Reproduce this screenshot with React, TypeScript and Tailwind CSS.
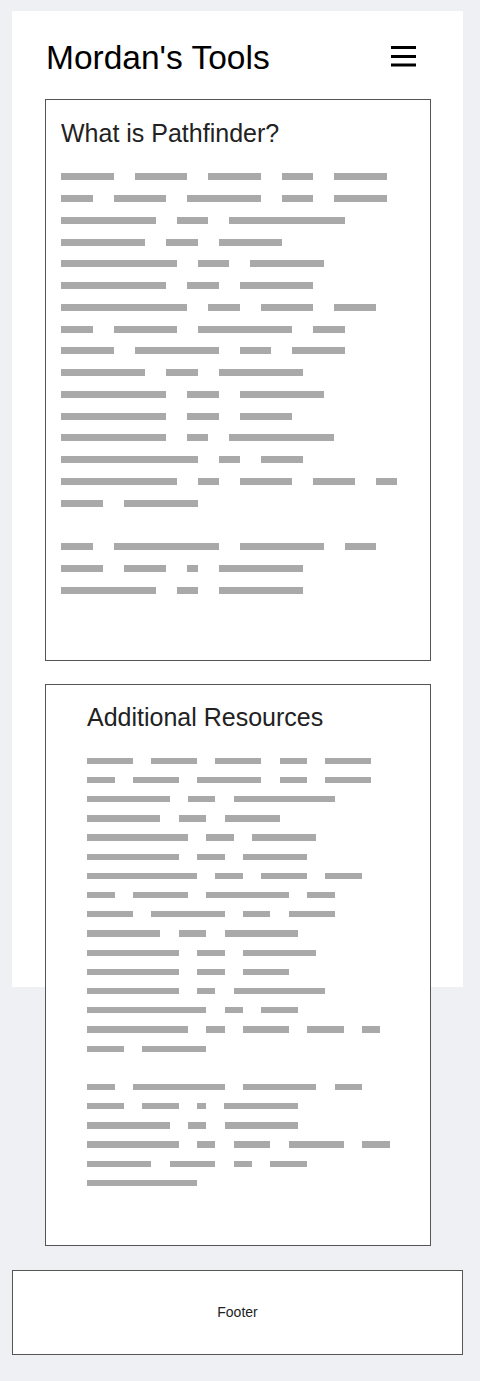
type Row = number[]

// placeholder copy: each number is a word length in character cells
const copy: Row[] = [
  [5, 5, 5, 3, 5],
  [3, 5, 7, 3, 5],
  [9, 3, 11],
  [8, 3, 6],
  [11, 3, 7],
  [10, 3, 7],
  [12, 3, 5, 4],
  [3, 6, 9, 3],
  [5, 8, 3, 5],
  [8, 3, 8],
  [10, 3, 8],
  [10, 3, 5],
  [10, 2, 10],
  [13, 2, 4],
  [11, 2, 5, 4, 2],
  [4, 7],
  [],
  [3, 10, 8, 3],
  [4, 4, 1, 8],
  [9, 2, 8],
  [10, 2, 4, 6, 3],
  [7, 5, 2, 4],
  [12],
]

function Placeholder({ unit, rowH, barH }: { unit: number; rowH: number; barH: number }) {
  return (
    <div>
      {copy.map((row, i) => (
        <div key={i} className="flex items-center" style={{ height: rowH, gap: unit * 2 }}>
          {row.map((n, j) => (
            <span key={j} className="block shrink-0 bg-[#a9a9a9]" style={{ width: n * unit, height: barH }} />
          ))}
        </div>
      ))}
    </div>
  )
}

function MenuIcon() {
  return (
    <svg width="25" height="24" viewBox="0 0 25 24" fill="#000" aria-hidden>
      <rect x="0" y="1" width="25" height="3" />
      <rect x="0" y="10" width="25" height="3" />
      <rect x="0" y="18.5" width="25" height="3" />
    </svg>
  )
}

export default function App() {
  return (
    <div className="min-h-screen bg-[#eef0f4] pt-[11px] pb-[26px] font-['Liberation_Sans',Arial,sans-serif]">
      <div className="ml-[12px] h-[976px] w-[451px] bg-white pt-[27px] pl-[33px] pr-[32px]">
        <header className="ml-[1px] mr-[15px] flex h-[40px] items-center justify-between">
          <h1 className="text-[33.5px] leading-[40px] text-black">Mordan's Tools</h1>
          <span className="-mt-[2px]">
            <MenuIcon />
          </span>
        </header>

        <section className="mt-[21px] h-[562px] w-[386px] border border-[#555] bg-white pt-[18px] pl-[15px]">
          <h2 className="text-[25px] leading-[30px] text-[#222]">What is Pathfinder?</h2>
          <div className="mt-[18px] h-[442px] overflow-hidden">
            <Placeholder unit={10.5} rowH={21.75} barH={7} />
          </div>
        </section>

        <section className="mt-[23px] h-[562px] w-[386px] border border-[#555] bg-white pt-[17px] pl-[41px]">
          <h2 className="text-[25px] leading-[30px] text-[#222]">Additional Resources</h2>
          <div className="mt-[19.25px]">
            <Placeholder unit={9.17} rowH={19.2} barH={6.3} />
          </div>
        </section>
      </div>

      <footer className="mt-[283px] ml-[12px] flex h-[85px] w-[451px] items-center justify-center border border-[#555] bg-white">
        <span className="text-[14px] text-[#222]">Footer</span>
      </footer>
    </div>
  )
}
